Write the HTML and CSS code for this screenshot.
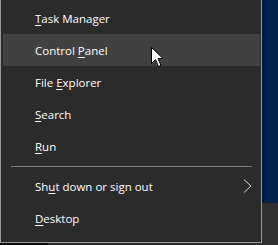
FILE: index.html
```html
<!DOCTYPE html>
<html lang="en">
<head>
    <meta charset="UTF-8">
    <title>Quick Link Menu</title>
    <link rel="stylesheet" href="styles.css">
</head>
<body>

<div class="screen">
    <div class="left">
        <!-- Win+X menu -->
        <div class="menu">
            <div class="item"><span><u>T</u>ask Manager</span></div>
            <div class="item active"><span>Control <u>P</u>anel</span></div>
            <div class="item"><span>File <u>E</u>xplorer</span></div>
            <div class="item"><span><u>S</u>earch</span></div>
            <div class="item"><span><u>R</u>un</span></div>
            <div class="sep"></div>
            <div class="item"><span>Sh<u>u</u>t down or sign out</span>
                <svg class="chev" width="9" height="14" viewBox="0 0 9 14">
                    <polyline points="1,0.5 8,7 1,13.5" fill="none" stroke="#d6d6d6" stroke-width="1"/>
                </svg>
            </div>
            <div class="item"><span><u>D</u>esktop</span></div>

            <svg class="cursor" width="14" height="21" viewBox="0 0 14 21">
                <path d="M0.5 0.5 L0.5 16.5 L4.5 12.5 L7.5 19.5 L10 18.5 L7 11.5 L12 11.5 Z" fill="#fff" stroke="#000" stroke-width="1"/>
            </svg>
        </div>
        <div class="below">
            <div class="below-dark"></div>
            <div class="below-bar"></div>
        </div>
    </div>

    <div class="side">
        <div class="desk"></div>
        <div class="bar"></div>
    </div>
</div>

</body>
</html>
```

FILE: styles.css
```css
body {
    margin: 0;
    background-color: #2b2b2b;
    font-family: "Open Sans", "Noto Sans", Arial, sans-serif;
}
.screen {
    display: flex;
    width: 278px;
    height: 245px;
    overflow: hidden;
}
.left {
    width: 262px;
    display: flex;
    flex-direction: column;
}
.menu {
    position: relative;
    box-sizing: border-box;
    width: 262px;
    height: 243px;
    background-color: #2b2b2b;
    border: 1px solid #9a9a9a;
    border-top: none;
    padding-top: 2px;
}
.item {
    display: flex;
    align-items: center;
    height: 32px;
    margin: 0 1px 0 2px;
    padding: 0 8px 0 32px;
    color: #ffffff;
    font-size: 11.5px;
    white-space: nowrap;
}
.item u {
    text-decoration-thickness: 1px;
    text-underline-offset: 2px;
}
.active {
    background-color: #414141;
}
.chev {
    margin-left: auto;
}
.sep {
    height: 1px;
    margin: 4px 9px 3px 10px;
    background-color: #7b7b7b;
}
.cursor {
    position: absolute;
    left: 150px;
    top: 47px;
}
.below {
    display: flex;
    height: 2px;
}
.below-dark {
    width: 48px;
    background-color: #0d0d0d;
}
.below-bar {
    flex: 1;
    background-color: #2e2e2e;
}
.side {
    flex: 1;
    display: flex;
    flex-direction: column;
}
.desk {
    height: 203px;
    background: linear-gradient(90deg, #00142c 0px, #012350 4px, #00224a 16px);
}
.bar {
    flex: 1;
    background-color: #303030;
}
```
